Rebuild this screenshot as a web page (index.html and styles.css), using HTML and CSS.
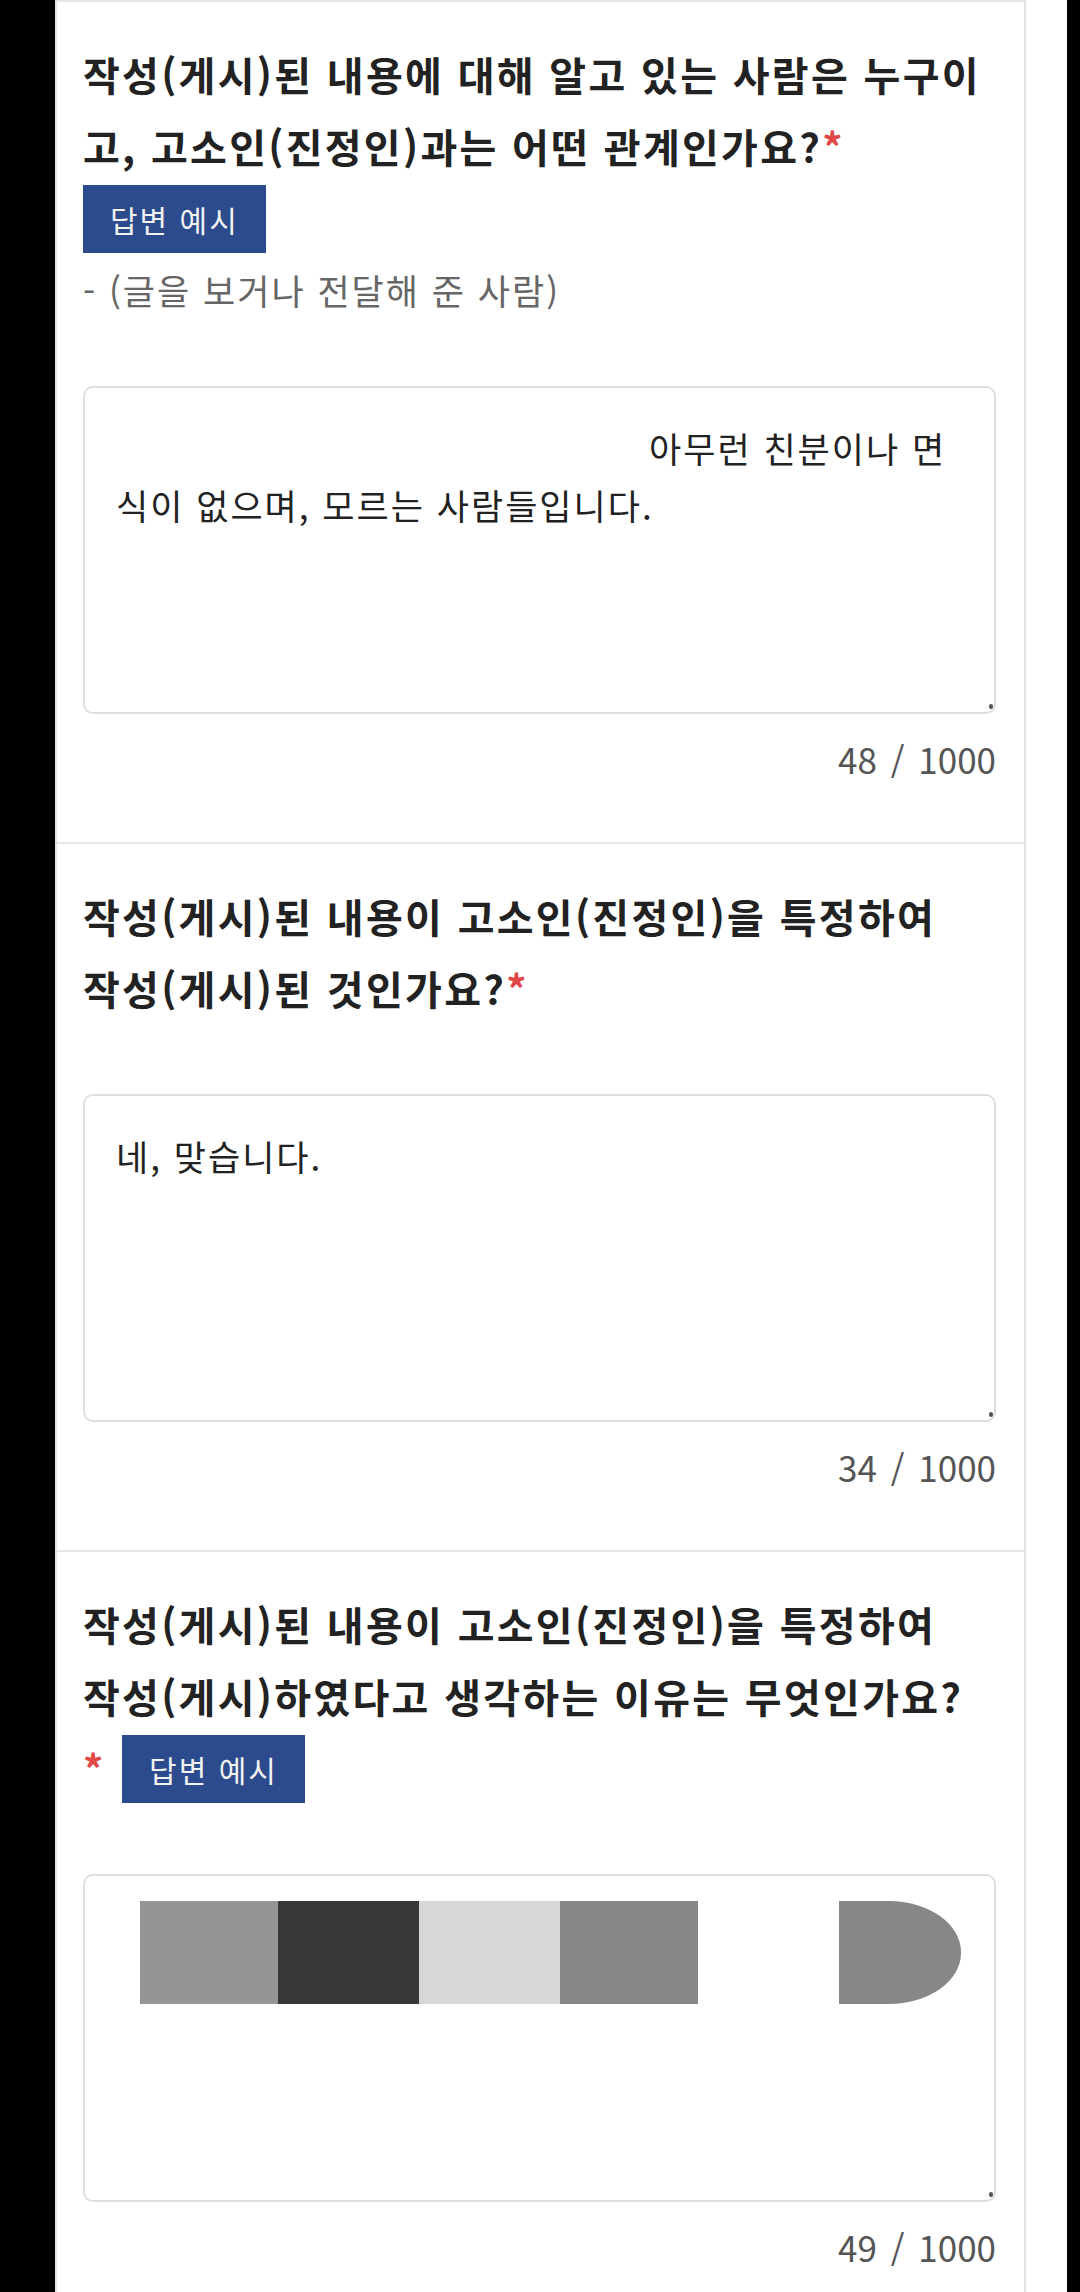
FILE: index.html
```html
<!DOCTYPE html>
<html lang="ko">
<head>
<meta charset="utf-8">
<title>고소장 작성</title>
<link rel="stylesheet" href="styles.css">
</head>
<body>
<div class="page">
  <div class="card">
    <section class="q">
      <p class="q-title">작성(게시)된 내용에 대해 알고 있는 사람은 누구이고, 고소인(진정인)과는 어떤 관계인가요?<span class="req">*</span> <button class="example" type="button">답변 예시</button></p>
      <p class="hint">- (글을 보거나 전달해 준 사람)</p>
      <div class="answer">
        <p class="answer-text"><span class="blank"></span>아무런 친분이나 면식이 없으며, 모르는 사람들입니다.</p>
      </div>
      <p class="count">48 <span class="sep">/</span> 1000</p>
    </section>
    <section class="q">
      <p class="q-title">작성(게시)된 내용이 고소인(진정인)을 특정하여 작성(게시)된 것인가요?<span class="req">*</span></p>
      <div class="answer">
        <p class="answer-text">네, 맞습니다.</p>
      </div>
      <p class="count">34 <span class="sep">/</span> 1000</p>
    </section>
    <section class="q">
      <p class="q-title">작성(게시)된 내용이 고소인(진정인)을 특정하여 작성(게시)하였다고 생각하는 이유는 무엇인가요?<span class="req">*</span> <button class="example" type="button">답변 예시</button></p>
      <div class="answer">
        <div class="mosaic">
          <span class="tile t1"></span>
          <span class="tile t2"></span>
          <span class="tile t3"></span>
          <span class="tile t4"></span>
          <span class="tile t5"></span>
          <span class="tile t6"></span>
        </div>
      </div>
      <p class="count">49 <span class="sep">/</span> 1000</p>
    </section>
  </div>
</div>
</body>
</html>
```

FILE: styles.css
```css
* { box-sizing: border-box; }
html, body { margin: 0; padding: 0; background: #000; }
body {
  font-family: "Noto Sans CJK KR", "Noto Sans", sans-serif;
  color: #222;
}
.page {
  margin-left: 55px;
  width: 1012px;
  min-height: 2292px;
  background: #fff;
}
.card {
  width: 971px;
  min-height: 2292px;
  border-left: 2px solid #e3e3e3;
  border-right: 2px solid #e3e3e3;
  background: #fff;
}
.q {
  border-top: 2px solid #e6e6e6;
  padding: 36px 28px 58px 26px;
}
.q-title {
  margin: 0;
  padding-right: 10px;
  font-size: 40px;
  font-weight: 700;
  line-height: 72px;
  letter-spacing: 2.3px;
  color: #222;
}
.req { color: #e04848; padding-right: 3px; }
.example {
  display: inline-block;
  height: 68px;
  margin: 0;
  padding: 0 27px;
  border: 0;
  border-radius: 0;
  background: #2b4b8c;
  color: #f2f2f2;
  font-family: inherit;
  font-size: 30px;
  font-weight: 400;
  line-height: 68px;
  letter-spacing: 2px;
  vertical-align: 3px;
}
.hint {
  margin: 10px 0 0;
  font-size: 35px;
  line-height: 52px;
  letter-spacing: 2px;
  color: #666;
}
.answer {
  position: relative;
  margin-top: 70px;
  height: 328px;
  border: 2px solid #dedede;
  border-radius: 10px;
  padding: 31px 31px;
  background: #fff;
}
.answer::after {
  content: "";
  position: absolute;
  right: 1px;
  bottom: 3px;
  width: 4px;
  height: 5px;
  border-radius: 2px;
  background: #555;
}
.answer-text {
  margin: 0;
  font-size: 35px;
  line-height: 57px;
  letter-spacing: 2px;
  color: #222;
}
.blank {
  display: inline-block;
  width: 533px;
  height: 1px;
}
.count {
  margin: 20px 0 0;
  text-align: right;
  font-size: 35px;
  line-height: 50px;
  color: #555;
}
.sep { margin: 0 4px; }
.mosaic {
  position: absolute;
  left: 55px;
  top: 25px;
  display: flex;
  height: 103px;
}
.tile { display: block; height: 103px; }
.t1 { width: 138px; background: #959595; }
.t2 { width: 141px; background: #383838; }
.t3 { width: 141px; background: #d7d7d7; }
.t4 { width: 138px; background: #878787; }
.t5 { width: 141px; background: #fff; }
.t6 { width: 122px; background: #878787; border-radius: 0 72px 72px 0 / 0 51px 51px 0; }
```
